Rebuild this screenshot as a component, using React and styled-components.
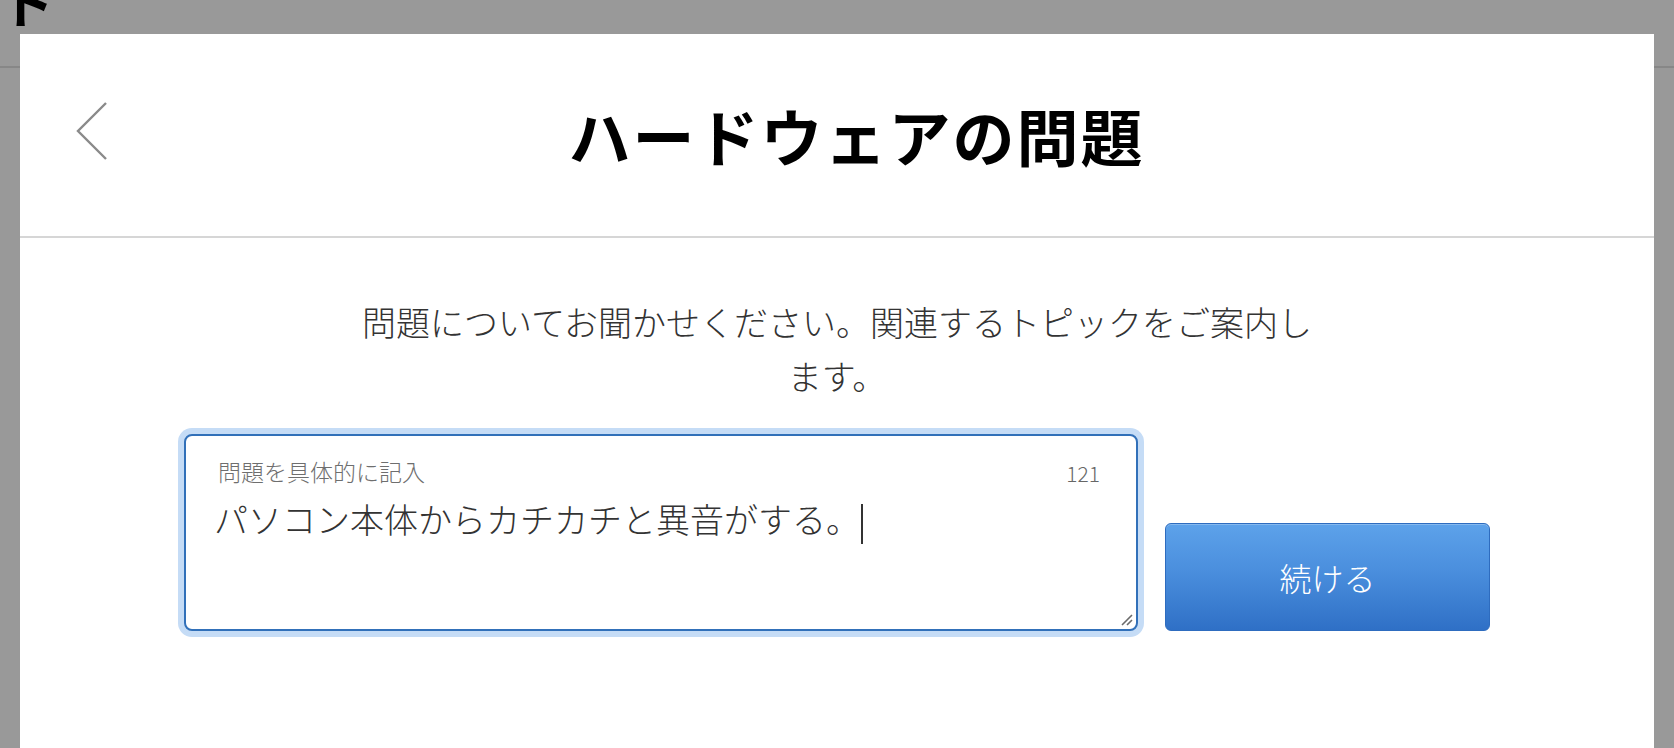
import React from 'react';
import styled, { createGlobalStyle } from 'styled-components';

const GlobalStyle = createGlobalStyle`
  html, body {
    margin: 0;
    padding: 0;
    background: #999999;
  }
  body {
    font-family: 'Noto Sans CJK JP', 'Noto Sans', sans-serif;
  }
`;

const HardwareIssue = () => {
  const description = 'パソコン本体からカチカチと異音がする。';

  return (
    <Page>
      <GlobalStyle />
      <BackdropNav>
        <BackdropGlyph>ト</BackdropGlyph>
      </BackdropNav>

      <Modal>
        <Header>
          <BackButton aria-label="戻る">
            <svg width="32" height="60" viewBox="0 0 32 60" fill="none">
              <path d="M30 1 L2 29 L30 57" stroke="#8a8a8a" strokeWidth="2.4" />
            </svg>
          </BackButton>
          <Title>ハードウェアの問題</Title>
        </Header>

        <Body>
          <Lead>問題についてお聞かせください。関連するトピックをご案内します。</Lead>

          <FormRow>
            <Field>
              <FieldTop>
                <FieldLabel>問題を具体的に記入</FieldLabel>
                <Counter>121</Counter>
              </FieldTop>
              <FieldText>
                {description}
                <Caret />
              </FieldText>
              <ResizeHandle width="14" height="14" viewBox="0 0 14 14">
                <path d="M13 3 L3 13 M13 8 L8 13" stroke="#6b6b6b" strokeWidth="1.6" />
              </ResizeHandle>
            </Field>
            <ContinueButton>続ける</ContinueButton>
          </FormRow>
        </Body>
      </Modal>
    </Page>
  );
};

export default HardwareIssue;

const Page = styled.div`
  position: relative;
  height: 748px;
  overflow: hidden;
  background: #999999;
`;

const BackdropNav = styled.div`
  height: 66px;
  border-bottom: 2px solid #878787;
  overflow: hidden;
`;

const BackdropGlyph = styled.div`
  font-family: 'Noto Sans CJK JP', sans-serif;
  font-weight: 700;
  font-size: 54px;
  line-height: 54px;
  color: #000;
  margin-top: -26px;
  margin-left: 0;
`;

const Modal = styled.div`
  position: absolute;
  top: 34px;
  left: 20px;
  right: 20px;
  bottom: 0;
  background: #fff;
`;

const Header = styled.div`
  height: 202px;
  display: flex;
  align-items: center;
  padding: 0 49px 0 56px;
  border-bottom: 2px solid #d6d6d6;
`;

const BackButton = styled.button`
  display: flex;
  align-items: center;
  justify-content: center;
  width: 32px;
  height: 60px;
  padding: 0;
  margin-top: -6px;
  border: none;
  background: none;
  cursor: pointer;
`;

const Title = styled.h1`
  flex: 1;
  margin: 0;
  text-align: center;
  font-family: 'Noto Sans CJK JP', sans-serif;
  font-weight: 700;
  font-size: 62px;
  line-height: 1.2;
  letter-spacing: 2px;
  color: #000;
`;

const Body = styled.div`
  display: flex;
  flex-direction: column;
  align-items: center;
  padding-top: 57px;
`;

const Lead = styled.p`
  margin: 0;
  max-width: 960px;
  text-align: center;
  font-family: 'Noto Sans CJK JP', sans-serif;
  font-weight: 300;
  font-size: 34px;
  line-height: 54px;
  color: #333;
`;

const FormRow = styled.div`
  display: flex;
  align-items: flex-end;
  justify-content: center;
  gap: 27px;
  margin-top: 31px;
`;

const Field = styled.div`
  position: relative;
  box-sizing: border-box;
  width: 954px;
  height: 197px;
  padding: 19px 36px 0 32px;
  border: 2px solid #3170b9;
  border-radius: 8px;
  box-shadow: 0 0 0 6px #c5dcf6;
  background: #fff;
`;

const FieldTop = styled.div`
  display: flex;
  justify-content: space-between;
  align-items: center;
`;

const FieldLabel = styled.span`
  font-family: 'Noto Sans CJK JP', sans-serif;
  font-weight: 300;
  font-size: 23px;
  line-height: 28px;
  color: #6e6e6e;
`;

const Counter = styled.span`
  font-family: 'Noto Sans CJK JP', sans-serif;
  font-weight: 300;
  font-size: 21px;
  line-height: 28px;
  margin-top: 4px;
  color: #666;
`;

const FieldText = styled.div`
  margin: 11px 0 0 -4px;
  font-family: 'Noto Sans CJK JP', sans-serif;
  font-weight: 300;
  font-size: 34px;
  line-height: 42px;
  color: #333;
`;

const Caret = styled.span`
  display: inline-block;
  width: 2px;
  height: 40px;
  margin-left: 1px;
  vertical-align: middle;
  background: #333;
`;

const ResizeHandle = styled.svg`
  position: absolute;
  right: 3px;
  bottom: 3px;
`;

const ContinueButton = styled.button`
  width: 325px;
  height: 108px;
  border: 1px solid #2e6cbf;
  border-radius: 6px;
  background: linear-gradient(180deg, #5da2ea 0%, #4a8edd 45%, #2f70c6 100%);
  box-shadow: inset 0 1px 0 rgba(255, 255, 255, 0.25);
  color: #fff;
  font-family: 'Noto Sans CJK JP', sans-serif;
  font-weight: 300;
  font-size: 32px;
  cursor: pointer;
`;
